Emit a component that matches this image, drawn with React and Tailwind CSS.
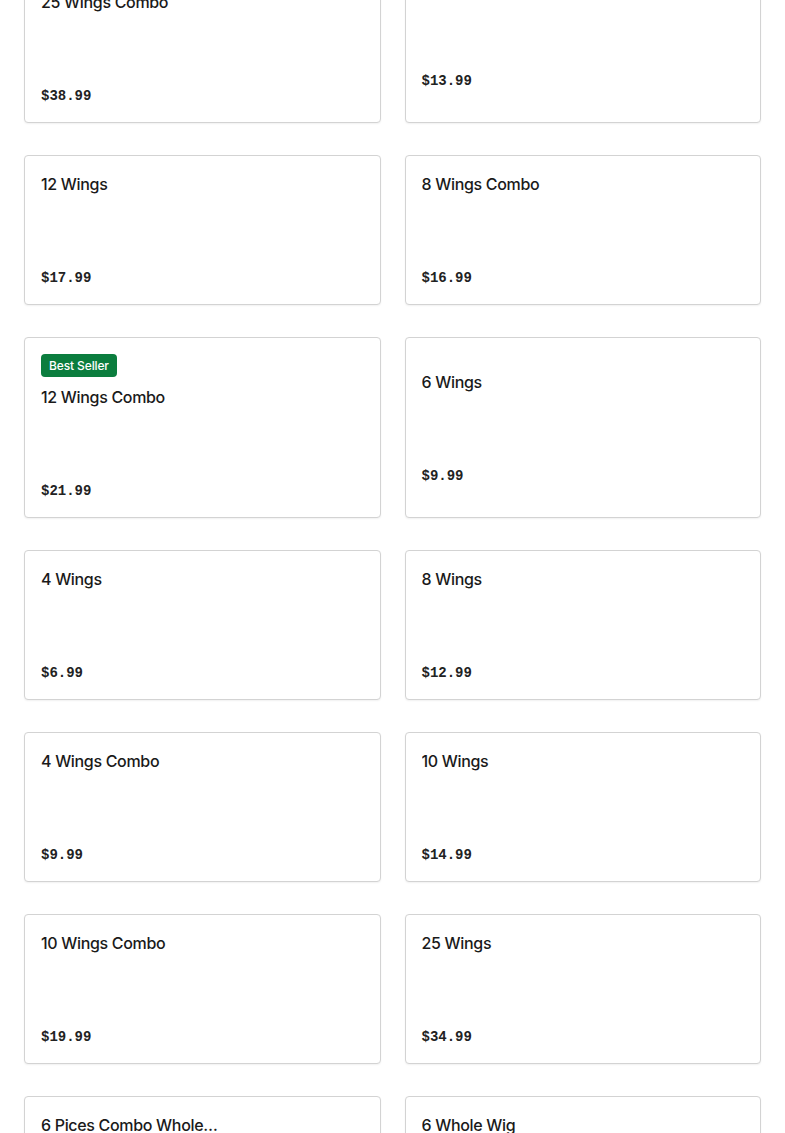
import React from "react";

const items = [
  { name: "25 Wings Combo", price: "$38.99", best: true },
  { name: "6 Wings Combo", price: "$13.99" },
  { name: "12 Wings", price: "$17.99" },
  { name: "8 Wings Combo", price: "$16.99" },
  { name: "12 Wings Combo", price: "$21.99", best: true },
  { name: "6 Wings", price: "$9.99" },
  { name: "4 Wings", price: "$6.99" },
  { name: "8 Wings", price: "$12.99" },
  { name: "4 Wings Combo", price: "$9.99" },
  { name: "10 Wings", price: "$14.99" },
  { name: "10 Wings Combo", price: "$19.99" },
  { name: "25 Wings", price: "$34.99" },
  { name: "6 Pices Combo Whole Wings", price: "$15.99" },
  { name: "6 Whole Wig", price: "$12.99" },
];

function MenuCard({ name, price, best }) {
  return (
    <div className="bg-white border border-[#d3d3d3] rounded-[4px] shadow-[0_1px_2px_rgba(0,0,0,0.06)] p-4 flex flex-col justify-center">
      {best && (
        <div className="self-start h-[23px] px-2 mb-2 rounded-[4px] bg-[#0b7d3e] text-white text-[12px] font-medium tracking-[-0.01em] flex items-center">
          Best Seller
        </div>
      )}
      <div className="max-w-[179px] text-[16px] leading-6 font-medium tracking-[-0.02em] text-[#1a1a1a] truncate mb-[72px]">
        {name}
      </div>
      <div className="text-[14px] leading-5 font-bold text-[#222] font-['Liberation_Mono',monospace]">
        {price}
      </div>
    </div>
  );
}

export default function App() {
  return (
    <div className="min-h-screen bg-white font-['Inter',sans-serif] overflow-hidden h-[1133px]">
      <div className="grid grid-cols-2 gap-x-6 gap-y-8 px-6 -mt-[58px]">
        {items.map((item, i) => (
          <MenuCard key={i} {...item} />
        ))}
      </div>
    </div>
  );
}
